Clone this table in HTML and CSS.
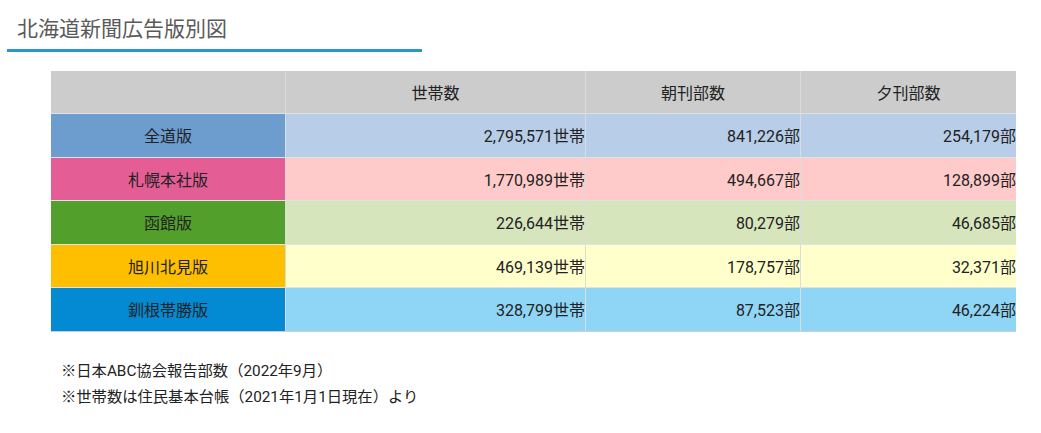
FILE: index.html
```html
<!DOCTYPE html>
<html lang="ja">
<head>
<meta charset="utf-8">
<link rel="stylesheet" href="styles.css">
</head>
<body>
<div class="page">
  <h2 class="title">北海道新聞広告版別図</h2>
  <div class="table-wrap">
    <table class="circ">
      <thead>
        <tr><th></th><th>世帯数</th><th>朝刊部数</th><th>夕刊部数</th></tr>
      </thead>
      <tbody>
        <tr class="r-all"><th>全道版</th><td>2,795,571世帯</td><td>841,226部</td><td>254,179部</td></tr>
        <tr class="r-sap"><th>札幌本社版</th><td>1,770,989世帯</td><td>494,667部</td><td>128,899部</td></tr>
        <tr class="r-hak"><th>函館版</th><td>226,644世帯</td><td>80,279部</td><td>46,685部</td></tr>
        <tr class="r-asa"><th>旭川北見版</th><td>469,139世帯</td><td>178,757部</td><td>32,371部</td></tr>
        <tr class="r-kus"><th>釧根帯勝版</th><td>328,799世帯</td><td>87,523部</td><td>46,224部</td></tr>
      </tbody>
    </table>
  </div>
  <div class="notes">
    <p>※日本ABC協会報告部数（2022年9月）</p>
    <p>※世帯数は住民基本台帳（2021年1月1日現在）より</p>
  </div>
</div>
</body>
</html>
```

FILE: styles.css
```css
html, body {
  margin: 0;
  padding: 0;
  background: #ffffff;
}
body {
  font-family: Roboto, "Noto Sans CJK JP", sans-serif;
  color: #222;
}
.page {
  padding: 16px 0 0 7px;
}
.title {
  margin: 0;
  width: 415px;
  box-sizing: border-box;
  padding: 0 0 6px 10px;
  font-size: 21px;
  font-weight: 400;
  line-height: 27px;
  color: #5a5a5a;
  border-bottom: 3px solid #2797cc;
}
.table-wrap {
  margin: 19px 0 0 44px;
  width: 965px;
  overflow: hidden;
}
.circ {
  border-collapse: collapse;
  table-layout: fixed;
  width: 965px;
  font-size: 16px;
}
.circ th, .circ td {
  height: 42.5px;
  padding: 0;
  font-weight: 400;
  color: #222;
  border-top: 1px solid #dfe3e8;
  border-left: 1px solid #dcdcdc;
}
.circ th:first-child { border-left: none; width: 234px; text-align: center; }
.circ thead th { background: #cccccc; border-top: none; height: 42px; }
.circ thead th:nth-child(2) { width: 299px; }
.circ thead th:nth-child(3) { width: 214px; }
.circ td { text-align: right; }
.circ tbody tr:last-child th, .circ tbody tr:last-child td { border-bottom: 1px solid #c9cfd6; }

.r-all th { background: #6d9ccf; }
.r-all td { background: #b8cee8; }
.r-sap th { background: #e45e95; }
.r-sap td { background: #ffcaca; }
.r-hak th { background: #52a02b; }
.r-hak td { background: #d7e5bd; }
.r-asa th { background: #fdbf00; }
.r-asa td { background: #ffffcc; }
.r-kus th { background: #0489d3; }
.r-kus td { background: #8fd5f5; }

.notes {
  margin: 26px 0 0 54px;
  font-size: 15.3px;
  line-height: 26px;
  color: #222;
}
.notes p { margin: 0; }
```
